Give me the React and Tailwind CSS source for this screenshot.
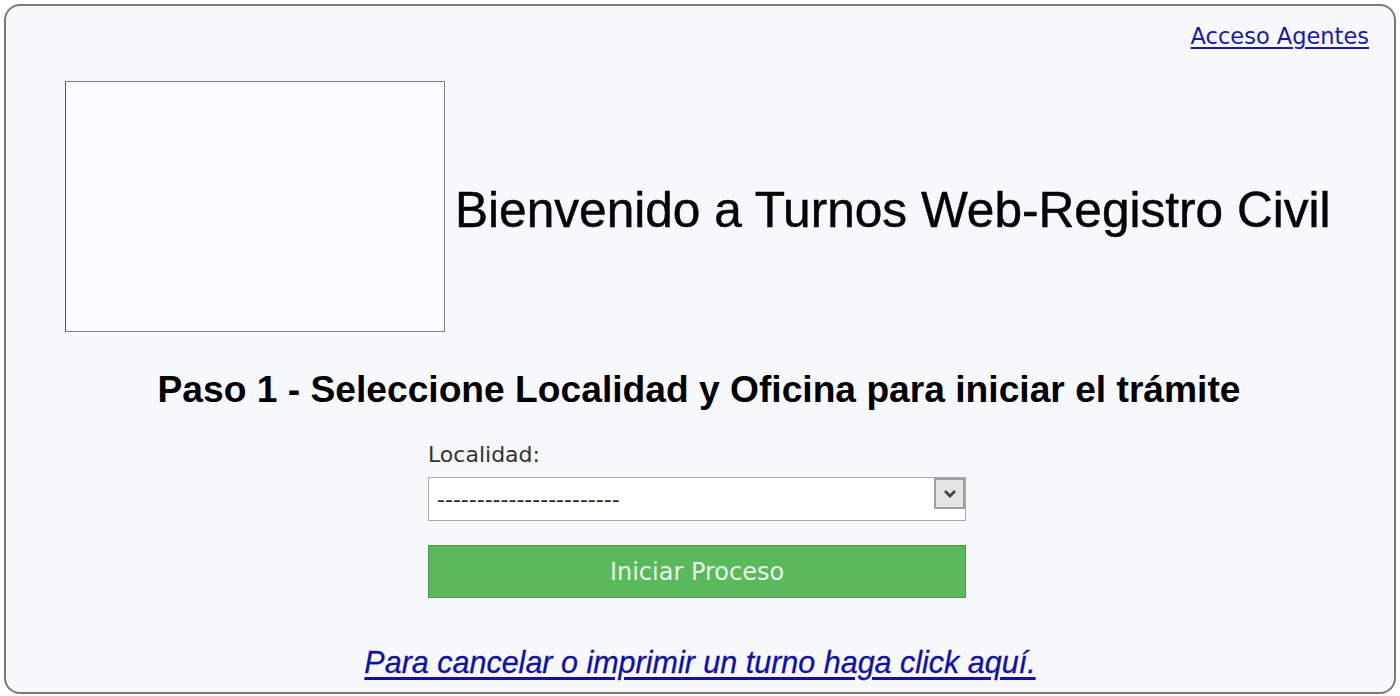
export default function App() {
  return (
    <div className="min-h-screen bg-white pt-[4px] pl-[4px]">
      <div className="w-[1392px] h-[690px] border-2 border-[#7a7a7a] rounded-[16px] bg-[#f7f8fc] flex flex-col">
        {/* top link */}
        <div className="flex justify-end pr-[25px] pt-[17px]">
          <a
            href="#"
            className="text-[22.5px] leading-[26px] text-[#1a1aa6] underline underline-offset-[3px] font-['DejaVu_Sans',Verdana,sans-serif]"
          >
            Acceso Agentes
          </a>
        </div>

        {/* header */}
        <div className="flex items-center mt-[32px] pl-[59px]">
          <div className="w-[380px] h-[251px] border border-[#808080] border-l-[#555] bg-[#fafbfe] shrink-0" />
          <h1 className="ml-[10px] mt-[7px] text-[49.6px] leading-[56px] text-[#050505] [-webkit-text-stroke:0.5px_#050505] font-['Liberation_Sans',Arial,sans-serif] whitespace-nowrap">
            Bienvenido a Turnos Web-Registro Civil
          </h1>
        </div>

        {/* step title */}
        <h2 className="mt-[35px] pr-[2px] text-center text-[37.2px] leading-[44px] font-bold text-black font-['Liberation_Sans',Arial,sans-serif]">
          Paso 1 - Seleccione Localidad y Oficina para iniciar el trámite
        </h2>

        {/* form */}
        <div className="mt-[31px] ml-[422px] w-[538px] flex flex-col font-['DejaVu_Sans',Verdana,sans-serif]">
          <label className="text-[22px] leading-[26px] text-[#333]">Localidad:</label>
          <div className="mt-[9px] h-[44px] bg-white border border-[#a8a8a8] flex items-start">
            <div className="flex-1 h-full flex items-center pl-[8px] text-[22px] text-[#222]">
              -----------------------
            </div>
            <div className="w-[31px] h-[31px] bg-[#e4e4e4] border-2 border-[#a0a0a0] flex items-center justify-center">
              <svg width="14" height="10" viewBox="0 0 14 10">
                <path d="M2 2 L7 7 L12 2" fill="none" stroke="#444" strokeWidth="2.8" />
              </svg>
            </div>
          </div>
          <button className="mt-[24px] h-[53px] bg-[#5cb85c] border border-[#4c9a4c] text-[#e4f7e4] text-[24px]">
            Iniciar Proceso
          </button>
        </div>

        {/* bottom link */}
        <div className="mt-[46px] text-center">
          <a
            href="#"
            className="text-[30.5px] leading-[36px] italic text-[#1212a2] [-webkit-text-stroke:0.3px_#1212a2] underline underline-offset-[4px] font-['Liberation_Sans',Arial,sans-serif]"
          >
            Para cancelar o imprimir un turno haga click aquí.
          </a>
        </div>
      </div>
    </div>
  );
}
